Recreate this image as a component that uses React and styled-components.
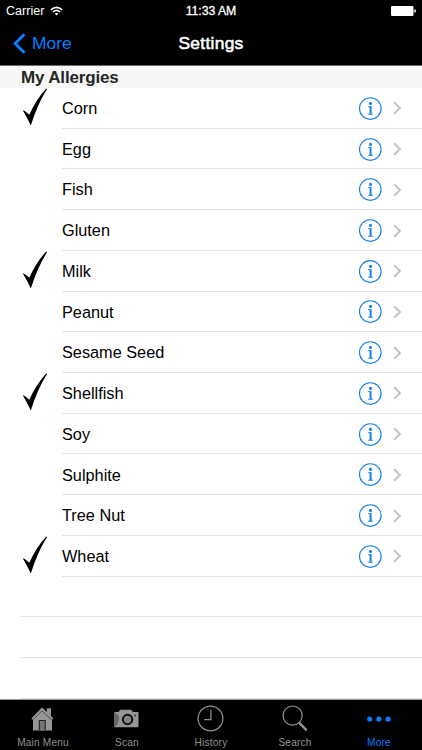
import React from 'react';
import styled, { createGlobalStyle } from 'styled-components';

const BLUE = '#087dff';

const GlobalStyle = createGlobalStyle`
  * { box-sizing: border-box; }
  body {
    margin: 0;
    background: #fff;
    font-family: "Liberation Sans", Arial, sans-serif;
    overflow: hidden;
  }
  svg { display: block; flex: none; }
`;

const Screen = styled.div`
  display: flex;
  flex-direction: column;
  width: 422px;
  height: 750px;
  background: #fff;
  overflow: hidden;
`;

const StatusBar = styled.div`
  display: grid;
  grid-template-columns: 1fr auto 1fr;
  align-items: center;
  height: 22px;
  padding: 0 6px 0 6px;
  background: #000;
  color: #fff;
  font-size: 12.5px;
  line-height: 22px;
`;

const Carrier = styled.div`
  display: flex;
  align-items: center;
  gap: 6px;
  letter-spacing: 0.02px;
`;

const Time = styled.div`
  font-size: 12.3px;
  letter-spacing: -0.05px;
  -webkit-text-stroke: 0.3px #fff;
`;

const BatteryWrap = styled.div`
  display: flex;
  justify-content: flex-end;
`;

const NavBar = styled.div`
  display: grid;
  grid-template-columns: 1fr auto 1fr;
  align-items: center;
  height: 44px;
  padding: 0 13px;
  background: #000;
  border-bottom: 1px solid #6e6e6e;
`;

const BackButton = styled.button`
  display: flex;
  align-items: center;
  gap: 6px;
  padding: 0;
  border: 0;
  background: none;
  color: ${BLUE};
  font: 17.4px "Liberation Sans", Arial, sans-serif;
`;

const Title = styled.h1`
  margin: 0;
  color: #fff;
  font-size: 17.4px;
  font-weight: 400;
  letter-spacing: 0.3px;
  -webkit-text-stroke: 0.55px #fff;
`;

const SectionHeader = styled.h2`
  flex: none;
  height: 22px;
  margin: 0;
  padding: 1px 0 0 21px;
  background: #f7f7f7;
  color: #262626;
  font-size: 17px;
  font-weight: 700;
  line-height: 22px;
  letter-spacing: -0.16px;
`;

const List = styled.ul`
  flex: 1;
  min-height: 0;
  margin: 0;
  padding: 0;
  list-style: none;
  overflow: hidden;
`;

const Row = styled.li`
  display: flex;
  height: 40.72px;
  padding-left: 21px;
`;

const CheckSlot = styled.div`
  width: 41px;
`;

const RowBody = styled.div`
  flex: 1;
  display: flex;
  align-items: center;
  padding-right: 20px;
  border-bottom: 1px solid #e4e4e6;
`;

const Label = styled.span`
  flex: 1;
  padding-top: 0.4px;
  color: #000;
  font-size: 16.3px;
  line-height: 20px;
`;

const Accessories = styled.div`
  display: flex;
  align-items: center;
  gap: 11px;
  padding-top: 1px;
`;

const EmptyRow = styled.li`
  height: 40.72px;
  margin-left: 21px;
  border-bottom: 1px solid #e4e4e6;
`;

const TabBar = styled.nav`
  display: grid;
  grid-template-columns: repeat(5, 84px);
  justify-content: center;
  height: 51px;
  background: #000;
  border-top: 1px solid #999;
`;

const Tab = styled.div`
  display: flex;
  flex-direction: column;
  align-items: center;
  color: ${({ $active }) => ($active ? BLUE : '#929292')};
`;

const TabIcon = styled.div`
  display: flex;
  align-items: center;
  height: 37px;
  padding-right: 0.6px;
`;

const TabLabel = styled.span`
  font-size: 10.1px;
  line-height: 12px;
  letter-spacing: 0.2px;
`;

const WifiIcon = () => (
  <svg width="13" height="10" viewBox="0 0 13 10" fill="none" stroke="#fff" strokeWidth="1.6">
    <path d="M.8 3.8Q6.5-1.2 12.2 3.8" />
    <path d="M2.9 6Q6.5 2.9 10.1 6" />
    <path d="M4.7 7.6Q6.5 6.2 8.3 7.6L6.5 9.6Z" fill="#fff" stroke="none" />
  </svg>
);

const BatteryIcon = () => (
  <svg width="25" height="10" viewBox="0 0 25 10" fill="#fff">
    <rect width="22.5" height="10" rx="1.2" />
    <path d="M23.3 3.2Q25 3.5 25 5T23.3 6.8Z" />
  </svg>
);

const BackIcon = () => (
  <svg width="13" height="21" viewBox="0 0 13 21" fill="none" stroke={BLUE} strokeWidth="3">
    <path d="M11.4 1.2L2.2 10.5L11.4 19.8" />
  </svg>
);

const CheckMark = () => (
  <svg width="27" height="38" viewBox="0 0 27 38">
    <path d="M1.7 22.2Q4 22.6 8.3 26.8Q14.8 11.7 25.2 .4L26.1 1.1Q17 15.2 9.8 37.4Q6.2 29.6 1.7 22.2Z" />
  </svg>
);

const InfoIcon = () => (
  <svg width="23" height="23" viewBox="0 0 23 23" fill="none" stroke="#1680ea">
    <circle cx="11.3" cy="11.5" r="10.8" strokeWidth="1.15" />
    <circle cx="11.5" cy="6.4" r="1.55" fill="#1680ea" stroke="none" />
    <path d="M9.2 9.7H11.7" strokeWidth="1" />
    <path d="M11.6 9.2V17.3" strokeWidth="2" />
    <path d="M9.2 17.2H13.9" strokeWidth="1" />
  </svg>
);

const ChevronIcon = () => (
  <svg width="9" height="14" viewBox="0 0 9 14" fill="none" stroke="#c4c4c8" strokeWidth="2">
    <path d="M1.2 1.2L6.9 7L1.2 12.8" />
  </svg>
);

const HomeIcon = () => (
  <svg width="23" height="24" viewBox="0 0 23 24">
    <path d="M11 .5L15.8 5V1.2H20V9L22.4 11.5L21 13V23.5H2V13L.3 11.5Z" fill="#969696" />
    <path d="M2 12.7L11 4L20.7 12.7" fill="none" stroke="#4b4b4b" strokeWidth=".9" />
    <path d="M8.3 23.5V13.5H14.2V23.5" fill="#737373" stroke="#222" strokeWidth="1.1" />
  </svg>
);

const CameraIcon = () => (
  <svg width="25" height="19" viewBox="0 0 25 19">
    <path d="M1 3H4.7L6 .7H17L19 3H23.5Q24.5 3 24.5 4V17.3Q24.5 18.3 23.5 18.3H1.5Q.3 18.3.3 17.3V3.8Z" fill="#969696" />
    <path d="M1 4.5H2.6Q5 6.5 5 10T2.6 16.7H1Z" fill="#656565" />
    <circle cx="13.6" cy="10.5" r="4.7" fill="#858585" stroke="#111" strokeWidth="2" />
    <circle cx="21.2" cy="6.5" r=".9" fill="#333" />
  </svg>
);

const ClockIcon = () => (
  <svg width="27" height="27" viewBox="0 0 27 27" fill="none" stroke="#929292" strokeWidth="1.2">
    <circle cx="13.5" cy="13.5" r="12.4" />
    <path d="M13.9 5V14.7H7.2" />
  </svg>
);

const SearchIcon = () => (
  <svg width="26" height="27" viewBox="0 0 26 27" fill="none" stroke="#929292">
    <circle cx="10.6" cy="10.6" r="9.6" strokeWidth="1.2" />
    <path d="M16.9 17.4L24.7 25.4" strokeWidth="2.3" />
  </svg>
);

const MoreIcon = () => (
  <svg width="24" height="6" viewBox="0 0 24 6" fill={BLUE}>
    <circle cx="2.7" cy="3" r="2.6" />
    <circle cx="11.9" cy="3" r="2.6" />
    <circle cx="21.1" cy="3" r="2.6" />
  </svg>
);

const allergies = [
  { name: 'Corn', checked: true },
  { name: 'Egg' },
  { name: 'Fish' },
  { name: 'Gluten' },
  { name: 'Milk', checked: true },
  { name: 'Peanut' },
  { name: 'Sesame Seed' },
  { name: 'Shellfish', checked: true },
  { name: 'Soy' },
  { name: 'Sulphite' },
  { name: 'Tree Nut' },
  { name: 'Wheat', checked: true },
];

const tabs = [
  { label: 'Main Menu', Icon: HomeIcon },
  { label: 'Scan', Icon: CameraIcon },
  { label: 'History', Icon: ClockIcon },
  { label: 'Search', Icon: SearchIcon },
  { label: 'More', Icon: MoreIcon, active: true },
];

export default function App() {
  return (
    <Screen>
      <GlobalStyle />
      <StatusBar>
        <Carrier>Carrier <WifiIcon /></Carrier>
        <Time>11:33 AM</Time>
        <BatteryWrap><BatteryIcon /></BatteryWrap>
      </StatusBar>
      <NavBar>
        <BackButton><BackIcon />More</BackButton>
        <Title>Settings</Title>
      </NavBar>
      <SectionHeader>My Allergies</SectionHeader>
      <List>
        {allergies.map(({ name, checked }) => (
          <Row key={name}>
            <CheckSlot>{checked && <CheckMark />}</CheckSlot>
            <RowBody>
              <Label>{name}</Label>
              <Accessories><InfoIcon /><ChevronIcon /></Accessories>
            </RowBody>
          </Row>
        ))}
        <EmptyRow />
        <EmptyRow />
        <EmptyRow />
      </List>
      <TabBar>
        {tabs.map(({ label, Icon, active }) => (
          <Tab key={label} $active={active}>
            <TabIcon><Icon /></TabIcon>
            <TabLabel>{label}</TabLabel>
          </Tab>
        ))}
      </TabBar>
    </Screen>
  );
}
